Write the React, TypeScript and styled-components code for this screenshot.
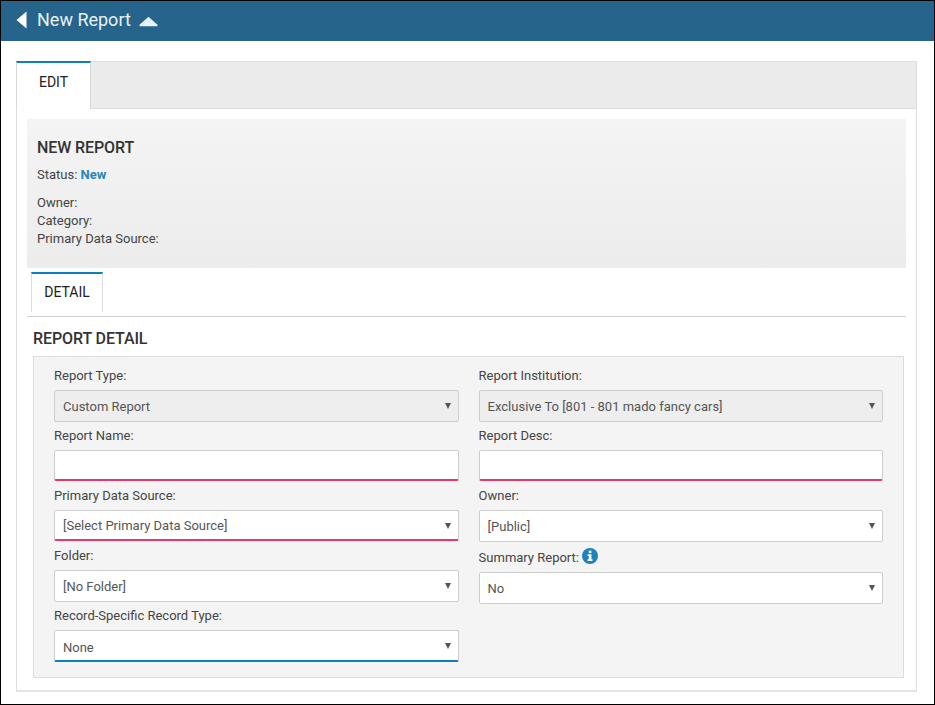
import styled, { createGlobalStyle } from 'styled-components';

const GlobalStyle = createGlobalStyle`
    html, body {
        margin: 0;
        padding: 0;
        background: #fff;
    }
    body {
        font-family: Roboto, "Liberation Sans", sans-serif;
        font-size: 13px;
        color: #444;
    }
    * {
        box-sizing: border-box;
    }
`;

const Page = styled.div`
    width: 935px;
    height: 705px;
    border: 1px solid #000;
    overflow: hidden;
    background: #fff;
`;

const Header = styled.header`
    height: 40px;
    background: #26648b;
    display: flex;
    align-items: center;
    padding: 0 0 3px 15px;
    color: #e6f3fa;
    font-size: 18px;
    svg {
        display: block;
    }
`;

const Title = styled.span`
    margin-left: 10px;
    margin-right: 8px;
`;

const CollapseIcon = styled.svg`
    margin-top: 3px;
`;

const Main = styled.main`
    margin: 20px 17px 0 15px;
    height: 631px;
    border: 1px solid #dedede;
    border-top: none;
    border-bottom: 2px solid #e3e3e3;
`;

const TabBar = styled.div`
    height: 48px;
    margin: 0 -1px;
    background: #ebebeb;
    border: 1px solid #dedede;
    border-width: 1px 1px 1px 0;
    display: flex;
`;

const Tab = styled.div`
    width: 75px;
    height: 48px;
    margin-top: -1px;
    background: #fff;
    border-top: 2px solid #0c80bd;
    border-right: 1px solid #d8d8d8;
    border-left: 1px solid #d8d8d8;
    color: #222;
    font-size: 14px;
    display: flex;
    align-items: center;
    justify-content: center;
    padding-bottom: 8px;
`;

const Content = styled.div`
    padding: 10px 10px 0;
`;

const InfoBox = styled.section`
    height: 149px;
    background: linear-gradient(to bottom, #f4f4f4, #ececec);
    padding: 19px 10px 0;
`;

const InfoTitle = styled.h2`
    margin: 0;
    font-size: 16px;
    line-height: 20px;
    font-weight: 500;
    letter-spacing: -0.1px;
    color: #333;
`;

const InfoLine = styled.div<{ $gap?: number }>`
    line-height: 18px;
    margin-top: ${(p) => p.$gap ?? 0}px;
`;

const StatusValue = styled.span`
    color: #2a85bd;
    font-weight: 700;
`;

const SubTabs = styled.div`
    margin-top: 4px;
    height: 45px;
    border-bottom: 1px solid #cfcfcf;
    padding-left: 4px;
`;

const SubTab = styled.div`
    width: 72px;
    height: 40px;
    background: #fff;
    border-top: 2px solid #0c80bd;
    border-left: 1px solid #dcdcdc;
    border-right: 1px solid #dcdcdc;
    color: #222;
    font-size: 14px;
    display: flex;
    align-items: center;
    justify-content: center;
    padding-bottom: 2px;
`;

const SectionTitle = styled.h3`
    margin: 0;
    padding: 12px 0 0 6px;
    height: 39px;
    font-size: 16px;
    line-height: 20px;
    font-weight: 500;
    letter-spacing: -0.1px;
    color: #333;
`;

const FormBox = styled.section`
    margin: 0 2px 0 6px;
    height: 322px;
    background: #f4f4f4;
    border: 1px solid #dcdcdc;
    padding: 10px 20px 0;
    display: grid;
    grid-template-columns: 405px 404.4px;
    column-gap: 19.6px;
`;

const Column = styled.div`
    display: flex;
    flex-direction: column;
`;

const Label = styled.label`
    height: 23px;
    line-height: 17px;
    display: flex;
    align-items: flex-start;
    color: #444;
`;

const SummaryLabel = styled(Label)`
    height: 25px;
    padding-top: 2px;
    svg {
        margin: -1px 0 0 3px;
    }
`;

const Field = styled.div<{ $disabled?: boolean; $invalid?: boolean; $focused?: boolean }>`
    position: relative;
    height: ${(p) => (p.$invalid ? 31 : 32)}px;
    margin-bottom: ${(p) => (p.$invalid ? 6 : 5)}px;
    padding: ${(p) => (p.$focused ? '3px' : '0')} 8px 0;
    display: flex;
    align-items: center;
    background: ${(p) => (p.$disabled ? '#eeeeee' : '#fff')};
    border: 1px solid #cdcdcd;
    border-bottom: ${(p) =>
        p.$invalid ? '2px solid #e8386a' : p.$focused ? '2px solid #0c80bd' : '1px solid #cdcdcd'};
    border-radius: 2px;
    color: #555;
    font-size: 13px;
`;

const Arrow = styled.span`
    position: absolute;
    right: 7px;
    top: 12px;
    width: 0;
    height: 0;
    border-left: 3px solid transparent;
    border-right: 3px solid transparent;
    border-top: 6px solid #555;
`;

interface SelectProps {
    value?: string;
    disabled?: boolean;
    invalid?: boolean;
    focused?: boolean;
}
const Select = ({ value, disabled, invalid, focused }: SelectProps) => (
    <Field $disabled={disabled} $invalid={invalid} $focused={focused}>
        {value}
        <Arrow />
    </Field>
);

const App = () => {
    return (
        <>
            <GlobalStyle />
            <Page>
                <Header>
                    <svg width="11" height="18" viewBox="0 0 11 18">
                        <path d="M10.5 0.5 V17.5 L0.5 9 Z" fill="#fff" />
                    </svg>
                    <Title>New Report</Title>
                    <CollapseIcon width="19" height="11" viewBox="0 0 18 10">
                        <path d="M9 0.5 L17.5 8 Q18 9.5 16.5 9.5 H1.5 Q0 9.5 0.5 8 Z" fill="#e6f3fa" />
                    </CollapseIcon>
                </Header>
                <Main>
                    <TabBar>
                        <Tab>EDIT</Tab>
                    </TabBar>
                    <Content>
                        <InfoBox>
                            <InfoTitle>NEW REPORT</InfoTitle>
                            <InfoLine $gap={8}>Status: <StatusValue>New</StatusValue></InfoLine>
                            <InfoLine $gap={10}>Owner:</InfoLine>
                            <InfoLine>Category:</InfoLine>
                            <InfoLine>Primary Data Source:</InfoLine>
                        </InfoBox>
                        <SubTabs>
                            <SubTab>DETAIL</SubTab>
                        </SubTabs>
                        <SectionTitle>REPORT DETAIL</SectionTitle>
                        <FormBox>
                            <Column>
                                <Label>Report Type:</Label>
                                <Select value="Custom Report" disabled />
                                <Label>Report Name:</Label>
                                <Field $invalid />
                                <Label>Primary Data Source:</Label>
                                <Select value="[Select Primary Data Source]" invalid />
                                <Label>Folder:</Label>
                                <Select value="[No Folder]" />
                                <Label>Record-Specific Record Type:</Label>
                                <Select value="None" focused />
                            </Column>
                            <Column>
                                <Label>Report Institution:</Label>
                                <Select value="Exclusive To [801 - 801 mado fancy cars]" disabled />
                                <Label>Report Desc:</Label>
                                <Field $invalid />
                                <Label>Owner:</Label>
                                <Select value="[Public]" />
                                <SummaryLabel>
                                    Summary Report:
                                    <svg width="16" height="16" viewBox="0 0 16 16">
                                        <circle cx="8" cy="8" r="8" fill="#1f82bb" />
                                        <rect x="6.8" y="2.6" width="2.6" height="2.5" fill="#fff" />
                                        <path d="M5.6 6.3 H9.4 V11.2 H10.5 V13 H5.6 V11.2 H6.8 V8 H5.6 Z" fill="#fff" />
                                    </svg>
                                </SummaryLabel>
                                <Select value="No" />
                            </Column>
                        </FormBox>
                    </Content>
                </Main>
            </Page>
        </>
    );
};

export default App;
